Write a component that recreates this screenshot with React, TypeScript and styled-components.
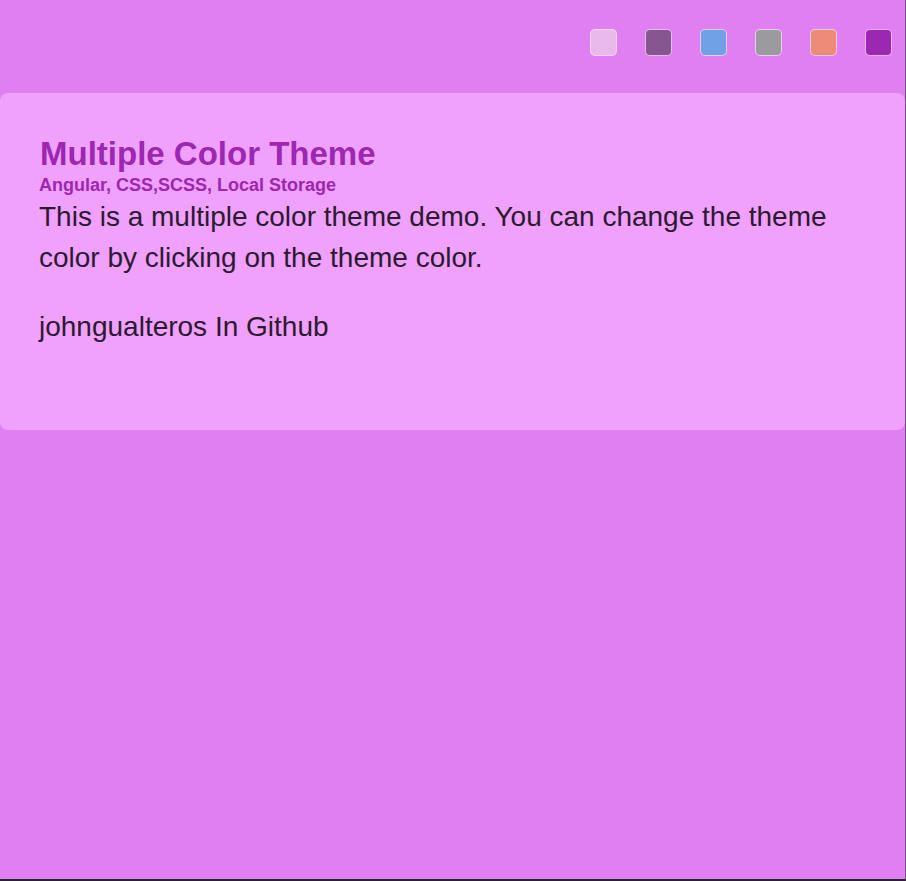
import React from "react";
import styled, { createGlobalStyle } from "styled-components";

const Global = createGlobalStyle`
  html, body { margin: 0; padding: 0; }
  body { font-family: "Liberation Sans", Arial, sans-serif; background: #df7ff1; }
  * { box-sizing: border-box; }
`;

const Page = styled.div`
  min-height: 881px;
  width: 906px;
  background: #df7ff1;
  border-right: 1px solid #6b5a70;
  border-bottom: 2px solid #25252f;
`;

const Toolbar = styled.div`
  height: 93px;
  display: flex;
  justify-content: flex-end;
  align-items: flex-start;
  padding: 29px 13px 0 0;
  gap: 28px;
`;

const Swatch = styled.button<{ $color: string }>`
  width: 27px;
  height: 27px;
  padding: 0;
  border-radius: 5px;
  border: 1px solid rgba(255, 225, 255, 0.75);
  background: ${(p) => p.$color};
  cursor: pointer;
`;

const Card = styled.section`
  width: 905px;
  height: 337px;
  background: #f0a0fd;
  border-radius: 8px;
  padding: 42px 40px 0 39px;
`;

const Title = styled.h1`
  margin: 0;
  font-size: 33px;
  line-height: 37px;
  font-weight: bold;
  color: #9c27b0;
  padding-left: 1px;
`;

const Subtitle = styled.h4`
  margin: 3px 0 0;
  font-size: 18px;
  line-height: 21px;
  font-weight: bold;
  color: #9c27b0;
`;

const Text = styled.p<{ $gap?: number }>`
  margin: ${(p) => p.$gap ?? 0}px 0 0;
  font-size: 28px;
  line-height: 41px;
  color: #2b1a30;
`;

const colors = ["#e9b9ec", "#87558f", "#70a0e6", "#9b9b9f", "#ee8a78", "#9c27b0"];

export default function App() {
  return (
    <>
      <Global />
      <Page>
        <Toolbar>
          {colors.map((c) => (
            <Swatch key={c} $color={c} aria-label={c} />
          ))}
        </Toolbar>
        <Card>
          <Title>Multiple Color Theme</Title>
          <Subtitle>Angular, CSS,SCSS, Local Storage</Subtitle>
          <Text $gap={0}>
            This is a multiple color theme demo. You can change the theme color by clicking on the theme color.
          </Text>
          <Text $gap={28}>johngualteros In Github</Text>
        </Card>
      </Page>
    </>
  );
}
